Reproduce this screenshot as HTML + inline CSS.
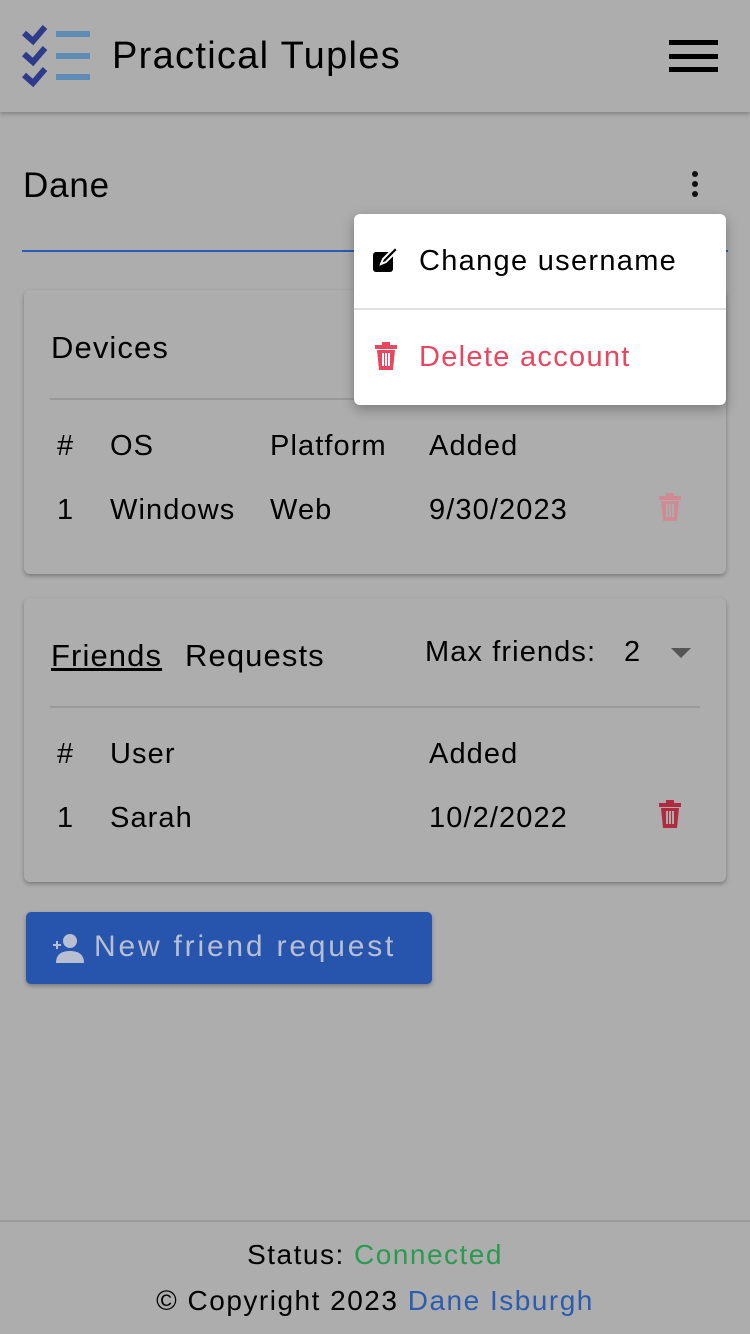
<!DOCTYPE html>
<html><head><meta charset="utf-8"><style>
*{box-sizing:border-box;margin:0;padding:0}
body{width:750px;height:1334px;background:#adadad;font-family:"Liberation Sans",sans-serif;color:#000;position:relative;overflow:hidden}
.abs{position:absolute;white-space:nowrap}
.hdr{position:absolute;left:0;top:0;width:750px;height:112px;background:#adadad;box-shadow:0 2px 4px rgba(0,0,0,.25)}
.card{position:absolute;left:24px;width:702px;background:#adadad;border-radius:6px;box-shadow:0 2px 4px rgba(0,0,0,.3)}
.t{font-size:29px;letter-spacing:1.1px}
.hr{position:absolute;height:2px;background:#999}
</style></head><body>
<div class="hdr">
<svg class="abs" style="left:22px;top:25px" width="70" height="64" viewBox="0 0 70 64">
<g fill="none" stroke="#2e3a8a" stroke-width="6"><path d="M2 8l9 8 12-14"/><path d="M2 29l9 8 12-14"/><path d="M2 50l9 8 12-14"/></g>
<g fill="#5f8cb5"><rect x="34" y="6" width="34" height="6"/><rect x="34" y="28" width="34" height="6"/><rect x="34" y="49" width="34" height="6"/></g>
</svg>
<div class="abs" style="left:112px;top:35px;font-size:38px;letter-spacing:1.3px">Practical Tuples</div>
<div class="abs" style="left:669px;top:40px;width:49px;height:5px;background:#000"></div>
<div class="abs" style="left:669px;top:54px;width:49px;height:5px;background:#000"></div>
<div class="abs" style="left:669px;top:67px;width:49px;height:5px;background:#000"></div>
</div>
<div class="abs" style="left:23px;top:166px;font-size:35px;letter-spacing:0.8px">Dane</div>
<div class="abs" style="left:692px;top:171px;width:6px;height:6px;border-radius:3px;background:#111"></div>
<div class="abs" style="left:692px;top:181px;width:6px;height:6px;border-radius:3px;background:#111"></div>
<div class="abs" style="left:692px;top:191px;width:6px;height:6px;border-radius:3px;background:#111"></div>
<div class="abs" style="left:22px;top:250px;width:706px;height:2px;background:#2a5bb5"></div>

<div class="card" style="top:290px;height:284px">
<div class="abs t" style="left:27px;top:40px;font-size:31px">Devices</div>
<div class="hr" style="left:26px;top:108px;width:650px"></div>
<div class="abs t" style="left:33px;top:140px">#</div>
<div class="abs t" style="left:86px;top:140px">OS</div>
<div class="abs t" style="left:246px;top:140px">Platform</div>
<div class="abs t" style="left:405px;top:140px">Added</div>
<div class="abs t" style="left:33px;top:204px">1</div>
<div class="abs t" style="left:86px;top:204px">Windows</div>
<div class="abs t" style="left:246px;top:204px">Web</div>
<div class="abs t" style="left:405px;top:204px">9/30/2023</div>
<svg class="abs" style="left:634px;top:203px" width="24" height="28" viewBox="0 0 24 28"><g fill="#d08a93"><rect x="1" y="3" width="22" height="4"/><rect x="8" y="0" width="8" height="4"/><path d="M3 8h18l-2 20H5z"/></g><g stroke="#adadad" stroke-width="2"><path d="M9 11v13M12 11v13M15 11v13"/></g></svg>
</div>

<div class="card" style="top:598px;height:284px">
<div class="abs t" style="left:27px;top:40px;font-size:31px;text-decoration:underline">Friends</div>
<div class="abs t" style="left:161px;top:40px;font-size:31px">Requests</div>
<div class="abs t" style="left:401px;top:38px">Max friends:</div>
<div class="abs t" style="left:600px;top:38px">2</div>
<div class="abs" style="left:647px;top:50px;border-left:10px solid transparent;border-right:10px solid transparent;border-top:10px solid #555"></div>
<div class="hr" style="left:26px;top:108px;width:650px"></div>
<div class="abs t" style="left:33px;top:140px">#</div>
<div class="abs t" style="left:86px;top:140px">User</div>
<div class="abs t" style="left:405px;top:140px">Added</div>
<div class="abs t" style="left:33px;top:204px">1</div>
<div class="abs t" style="left:86px;top:204px">Sarah</div>
<div class="abs t" style="left:405px;top:204px">10/2/2022</div>
<svg class="abs" style="left:634px;top:202px" width="24" height="28" viewBox="0 0 24 28"><g fill="#b02a40"><rect x="1" y="3" width="22" height="4"/><rect x="8" y="0" width="8" height="4"/><path d="M3 8h18l-2 20H5z"/></g><g stroke="#adadad" stroke-width="2"><path d="M9 11v13M12 11v13M15 11v13"/></g></svg>
</div>

<div class="abs" style="left:26px;top:912px;width:406px;height:72px;background:#2755ae;border-radius:5px;box-shadow:0 2px 4px rgba(0,0,0,.3)"></div>
<svg class="abs" style="left:52px;top:932px" width="32" height="32" viewBox="0 0 32 32"><g fill="#b8bfd0"><circle cx="18" cy="9" r="7"/><path d="M4 31c0-9 6-12 14-12s14 3 14 12z"/><path d="M1 12h8v2H1zM4 9h2v8H4z"/></g></svg>
<div class="abs" style="left:94px;top:930px;font-size:30px;color:#b8bfd0;letter-spacing:2.8px">New friend request</div>

<div class="abs" style="left:0;top:1220px;width:750px;height:2px;background:#999"></div>
<div class="abs" style="left:0;top:1239px;width:750px;text-align:center;font-size:28px;letter-spacing:1.5px">Status: <span style="color:#2a9a4f">Connected</span></div>
<div class="abs" style="left:0;top:1285px;width:750px;text-align:center;font-size:28px;letter-spacing:1.5px">© Copyright 2023 <span style="color:#2a5db0">Dane Isburgh</span></div>

<div class="abs" style="left:354px;top:214px;width:372px;height:191px;background:#fff;border-radius:6px;box-shadow:0 4px 12px rgba(0,0,0,.3)">
<svg class="abs" style="left:19px;top:33px" width="26" height="26" viewBox="0 0 26 26"><rect x="0" y="5" width="20" height="20" rx="3" fill="#000"/><path d="M8 17l2-5 12-12 3 3-12 12z" fill="#000" stroke="#fff" stroke-width="2"/></svg>
<div class="abs" style="left:65px;top:31px;font-size:29px;letter-spacing:1.3px">Change username</div>
<div class="abs" style="left:0;top:94px;width:372px;height:2px;background:#e0e0e0"></div>
<svg class="abs" style="left:20px;top:128px" width="24" height="28" viewBox="0 0 24 28"><g fill="#e8475f"><rect x="1" y="3" width="22" height="4"/><rect x="8" y="0" width="8" height="4"/><path d="M3 8h18l-2 20H5z"/></g><g stroke="#fff" stroke-width="2"><path d="M9 11v13M12 11v13M15 11v13"/></g></svg>
<div class="abs" style="left:65px;top:127px;font-size:29px;letter-spacing:1.3px;color:#e8475f">Delete account</div>
</div>
</body></html>
